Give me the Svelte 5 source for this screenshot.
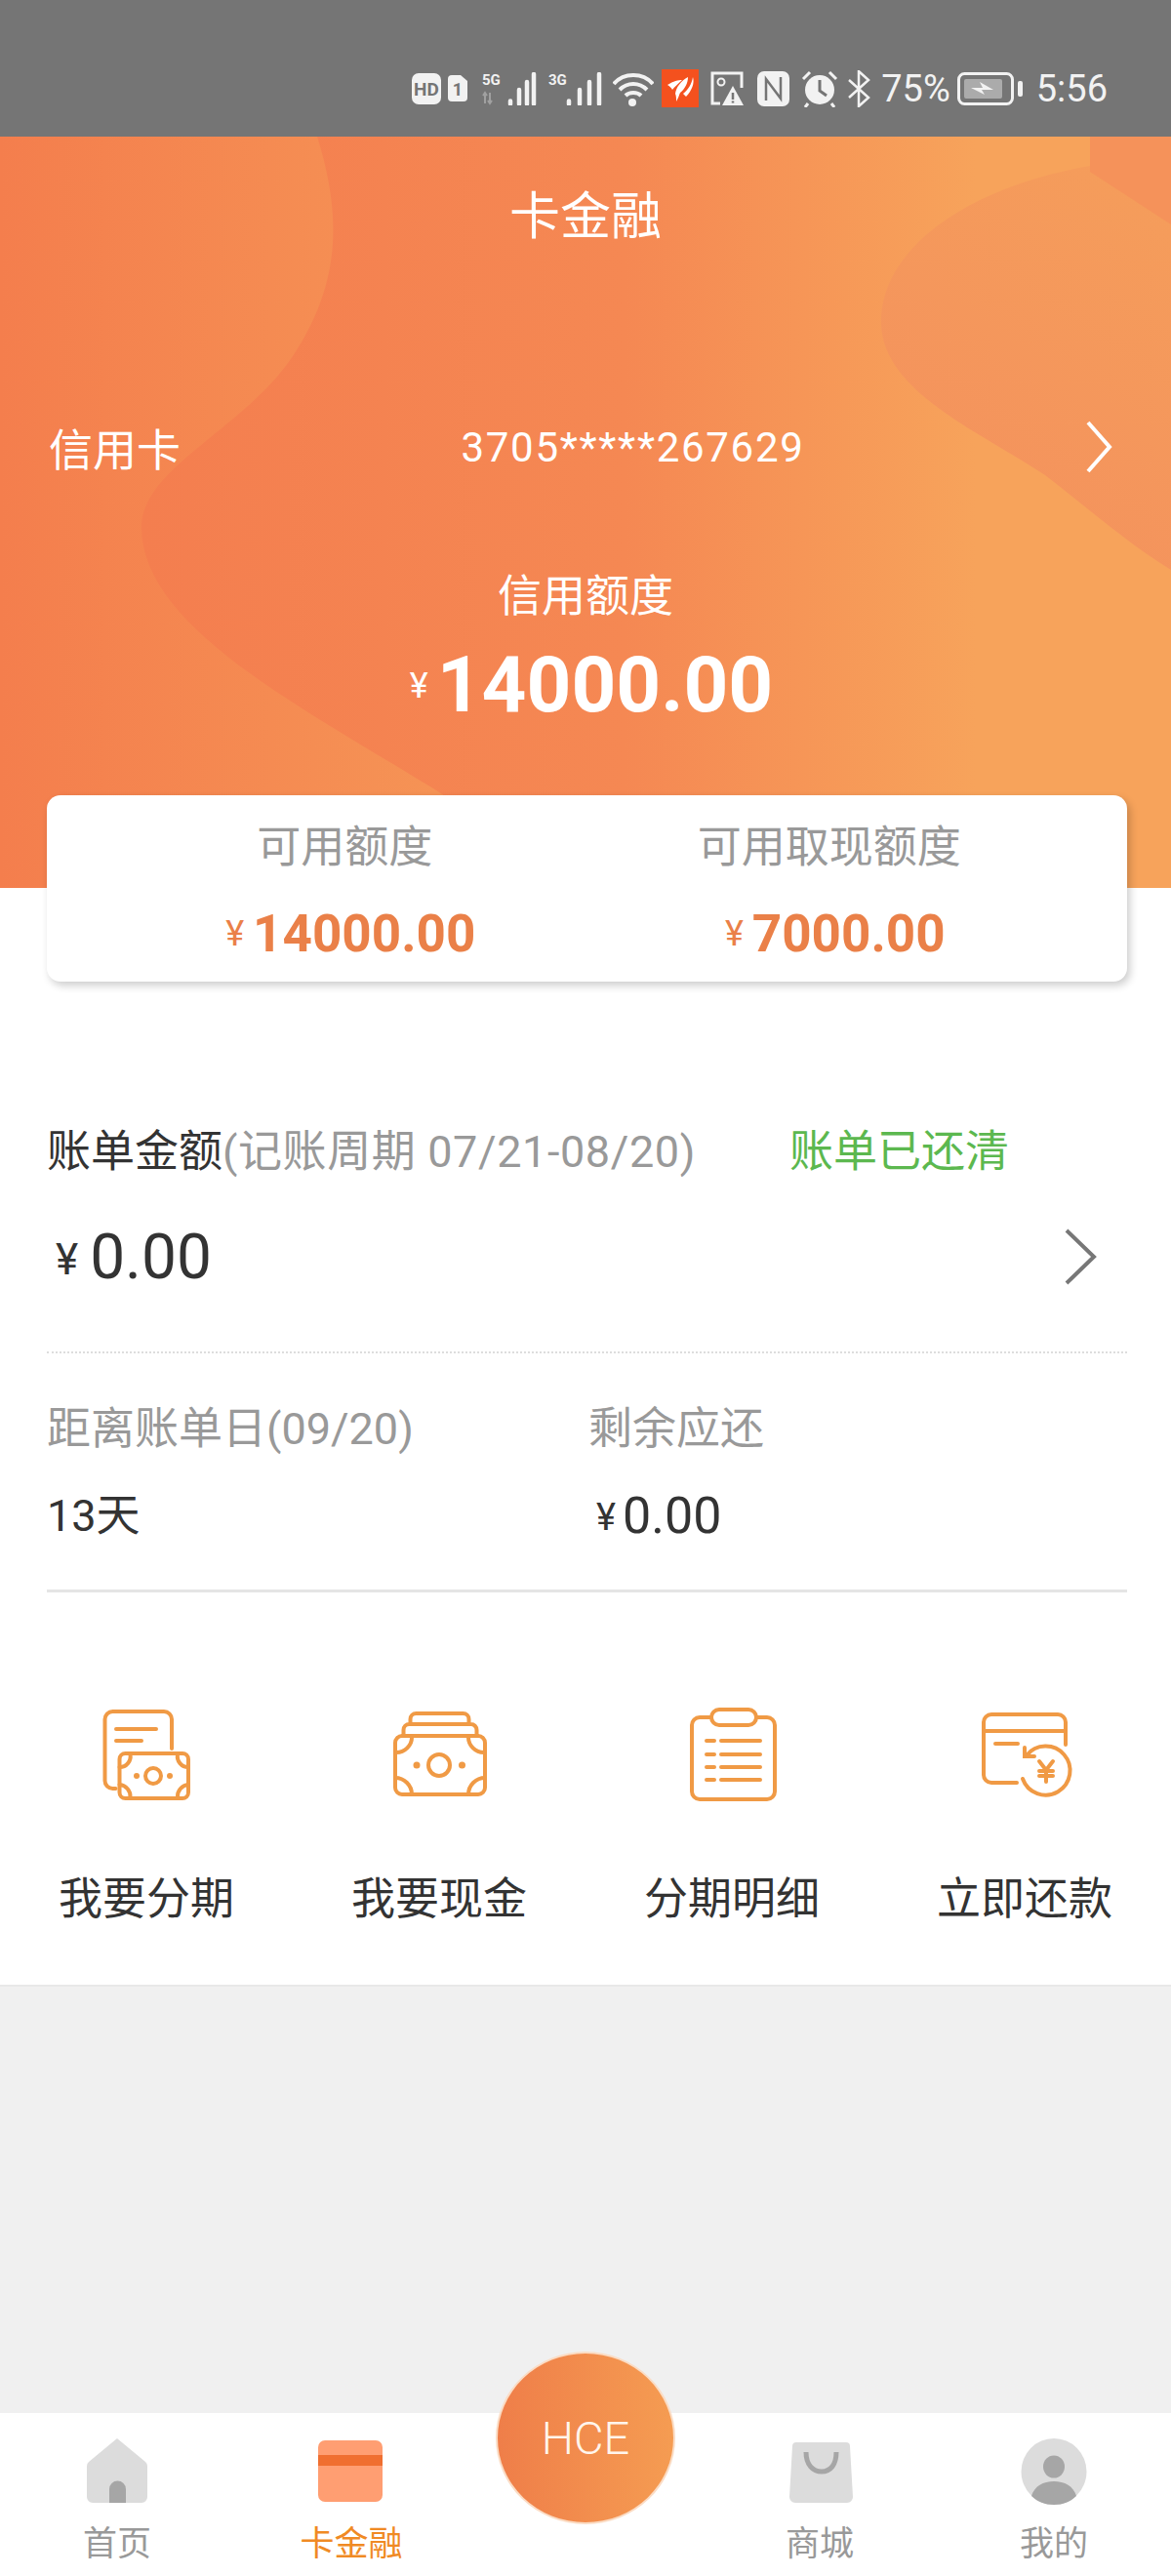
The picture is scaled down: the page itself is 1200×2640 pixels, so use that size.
<script>
  const actions = ["我要分期", "我要现金", "分期明细", "立即还款"];
</script>

<div class="page">
  <div class="status-bar">
    <svg class="si" width="30" height="32" viewBox="0 0 30 32">
      <rect width="30" height="32" rx="7" fill="#f2f2f2" />
      <text x="15" y="23" class="badge-text" font-size="19">HD</text>
    </svg>
    <svg class="si gap7" width="20" height="27" viewBox="0 0 20 27">
      <path d="M4 0h9l7 6v17a4 4 0 0 1-4 4H4a4 4 0 0 1-4-4V4a4 4 0 0 1 4-4z" fill="#f2f2f2" />
      <text x="10" y="21" class="badge-text" font-size="18">1</text>
    </svg>
    <svg class="si gap15" width="56" height="34" viewBox="0 0 56 34">
      <text x="0" y="13" class="net" font-size="15">5G</text>
      <path d="M3 22v10M1 24l2-3 2 3M8 21v10M6 29l2 3 2-3" stroke="#a0a0a0" stroke-width="2" fill="none" />
      <path d="M29 29.500v3M38 18v14.500M46 10v22.500M53 2v30.500" stroke="#f2f2f2" stroke-width="4.500" stroke-linecap="round" />
    </svg>
    <svg class="si gap12" width="56" height="34" viewBox="0 0 56 34">
      <text x="0" y="13" class="net" font-size="15">3G</text>
      <path d="M21 29.500v3M32 18v14.500M42 10v22.500M52 2v30.500" stroke="#f2f2f2" stroke-width="4.500" stroke-linecap="round" />
    </svg>
    <svg class="si gap10" width="42" height="36" viewBox="0 0 42 36">
      <path d="M1 13C11 1 31 1 41 13M7 19c8-8 20-8 28 0M13 25c4-4 12-4 16 0" stroke="#f2f2f2" stroke-width="4" fill="none" />
      <circle cx="20" cy="32" r="4" fill="#f2f2f2" />
    </svg>
    <svg class="si gap8" width="38" height="39" viewBox="0 0 38 39">
      <rect width="38" height="39" fill="#f4511e" />
      <path d="M6 16C12 12 17 11 21 11 17 15 13 18 11 21 10 19 8 17 6 16z" fill="#fff" />
      <path d="M14 25C15 18 20 12 27 8 27 14 24 20 19 24 18 26 17 30 15 33 15 30 15 27 14 25z" fill="#fff" />
      <path d="M22 25C27 21 31 15 32 8 34 14 31 22 25 28 24 27 23 26 22 25z" fill="#fff" />
    </svg>
    <svg class="si gap12" width="34" height="36" viewBox="0 0 34 36">
      <path d="M10 33H2V2h30v15" stroke="#f2f2f2" stroke-width="3" fill="none" />
      <circle cx="11" cy="11" r="3.500" stroke="#f2f2f2" stroke-width="2" fill="none" />
      <path d="M23 15l11 20H12z" fill="#f2f2f2" />
      <path d="M23 22v7M23 30.500v2" stroke="#757575" stroke-width="2.500" />
    </svg>
    <svg class="si gap14" width="33" height="36" viewBox="0 0 33 36">
      <rect width="33" height="36" rx="7" fill="#f2f2f2" />
      <path d="M9 30V8l15 20V6" stroke="#757575" stroke-width="2.500" fill="none" />
    </svg>
    <svg class="si gap12" width="38" height="38" viewBox="0 0 38 38">
      <circle cx="19" cy="20" r="15" fill="#f2f2f2" />
      <path d="M19 10v11l7 5" stroke="#757575" stroke-width="3" fill="none" />
      <path d="M2 9l7-7M36 9l-7-7M7 34l-3 4M31 34l3 4" stroke="#f2f2f2" stroke-width="3" />
    </svg>
    <svg class="si gap10" width="23" height="38" viewBox="0 0 23 38">
      <path d="M1 10l20 18-10 9V1l10 9L1 28" stroke="#f2f2f2" stroke-width="2.500" fill="none" />
    </svg>
    <span class="pct">75%</span>
    <svg class="si gap7" width="67" height="34" viewBox="0 0 67 34">
      <rect x="1.500" y="1.500" width="55" height="31" rx="6" stroke="#f2f2f2" stroke-width="3" fill="none" />
      <rect x="7" y="7" width="39" height="20" rx="2" fill="#ababab" />
      <path d="M14 16h12l-3-6 14 8H25l3 5z" fill="#f2f2f2" />
      <rect x="62" y="9" width="5" height="16" rx="2" fill="#f2f2f2" />
    </svg>
    <span class="time">5:56</span>
  </div>

  <div class="hero">
    <svg class="waves" width="1200" height="770" viewBox="0 0 1200 770">
      <defs>
        <linearGradient id="gl" x1="0" x2="600" y1="0" y2="0" gradientUnits="userSpaceOnUse">
          <stop offset="0" stop-color="#f47e4d" />
          <stop offset="1" stop-color="#f69a58" />
        </linearGradient>
        <linearGradient id="gr" x1="950" x2="1200" y1="420" y2="60" gradientUnits="userSpaceOnUse">
          <stop offset="0" stop-color="#f4915d" />
          <stop offset="1" stop-color="#f59d5b" />
        </linearGradient>
      </defs>
      <path
        d="M0 0H325C350 80 350 150 300 225C250 300 145 340 145 400C145 500 300 580 444 668L600 770H0Z"
        fill="url(#gl)"
      />
      <path
        d="M1117 0V30C1000 50 903 110 903 190C903 260 1000 300 1071 347C1120 385 1160 420 1200 444V0Z"
        fill="url(#gr)"
      />
      <path d="M1117 0V36L1200 90V0Z" fill="#f5925a" />
    </svg>

    <div class="title">卡金融</div>
    <div class="card-row">
      <span>信用卡</span>
      <span class="card-no">3705*****267629</span>
      <svg width="28" height="54" viewBox="0 0 28 54">
        <path d="M3 2l22 25L3 52" stroke="#fff" stroke-width="4" fill="none" />
      </svg>
    </div>
    <div class="limit-label">信用额度</div>
    <div class="limit-value"><span class="yen">¥</span>14000.00</div>

    <div class="quota">
      <div class="quota-col">
        <div class="quota-label">可用额度</div>
        <div class="quota-value"><span class="yen-sm">¥</span>14000.00</div>
      </div>
      <div class="quota-col">
        <div class="quota-label">可用取现额度</div>
        <div class="quota-value"><span class="yen-sm">¥</span>7000.00</div>
      </div>
    </div>
  </div>

  <div class="content">
    <div class="bill">
      <div class="bill-head">
        <span class="dark">账单金额</span><span class="muted period">(记账周期 07/21-08/20)</span>
        <span class="paid">账单已还清</span>
      </div>
      <div class="bill-amount">
        <div class="amount-big"><span class="yen-dark">¥</span>0.00</div>
        <svg width="34" height="58" viewBox="0 0 34 58">
          <path d="M3 2l28 27L3 56" stroke="#777" stroke-width="4" fill="none" />
        </svg>
      </div>
      <div class="dotted"></div>
      <div class="stats">
        <div>
          <div class="muted stat-line">距离账单日(09/20)</div>
          <div class="dark stat-value">13天</div>
        </div>
        <div>
          <div class="muted stat-line">剩余应还</div>
          <div class="dark stat-value money"><span class="yen-small">¥</span>0.00</div>
        </div>
      </div>
      <div class="solid"></div>
    </div>

    <div class="actions">
      {#each actions as label, i}
        <div class="action">
          <svg class="action-icon" width="120" height="100" viewBox="0 0 120 100">
            {#if i === 0}
              <path d="M86 43V13a8 8 0 0 0-8-8H25.500a8 8 0 0 0-8 8V76a8 8 0 0 0 8 8h3M29 23h41M29 35h26" />
              <rect x="32.500" y="48" width="70.500" height="46" rx="6" />
              <circle cx="67" cy="71" r="8" />
              <path d="M32.500 62a11 11 0 0 0 11-13M103 62a11 11 0 0 1-11-13M32.500 80a12 12 0 0 1 11 13M103 80a12 12 0 0 0-11 13" />
              <circle class="dot" cx="50" cy="71" r="3" />
              <circle class="dot" cx="84" cy="71" r="3" />
            {:else if i === 1}
              <rect x="15" y="30" width="92" height="60" rx="7" />
              <path d="M23.500 30V24a6 6 0 0 1 6-6h63a6 6 0 0 1 6 6v6M30.500 18V13a6 6 0 0 1 6-6h48a6 6 0 0 1 6 6v5" />
              <circle cx="60" cy="60" r="11" />
              <path d="M15 47a16 16 0 0 0 17-17M107 47a16 16 0 0 1-17-17M15 73a17 17 0 0 1 17 17M107 73a17 17 0 0 0-17 17" />
              <circle class="dot" cx="37" cy="60" r="3.500" />
              <circle class="dot" cx="83.500" cy="60" r="3.500" />
            {:else if i === 2}
              <path d="M39 11H27a8 8 0 0 0-8 8V87a8 8 0 0 0 8 8H96a8 8 0 0 0 8-8V19a8 8 0 0 0-8-8H85" />
              <rect x="39" y="3" width="46" height="16" rx="8" />
              <path d="M34 35h8M49 35h40M34 49h8M49 49h40M34 62h8M49 62h40M34 75h8M49 75h40" />
            {:else}
              <path d="M52 78H26a8 8 0 0 1-8-8V16a8 8 0 0 1 8-8H94a8 8 0 0 1 8 8V39M18 25h84M30 38h23" />
              <path d="M58 74A25 25 0 1 0 62 50M60 42v9h10" />
              <path d="M75 56l7 9 7-9M82 65v12M75 66h14M75 71h14" />
            {/if}
          </svg>
          <div class="action-label">{label}</div>
        </div>
      {/each}
    </div>
  </div>

  <div class="spacer"></div>

  <div class="tabbar">
    <div class="tab">
      <svg width="70" height="70" viewBox="0 0 70 70">
        <path d="M35 1L6 25a6 6 0 0 0-2 5V61a6 6 0 0 0 6 6H60a6 6 0 0 0 6-6V30a6 6 0 0 0-2-5z" fill="#dcdcdc" />
        <path d="M27 67V53a8.500 8.500 0 0 1 17 0V67z" fill="#a6a6a6" />
      </svg>
      <span class="tab-label">首页</span>
    </div>
    <div class="tab active">
      <svg width="70" height="70" viewBox="0 0 70 70">
        <rect x="1" y="3" width="66" height="63" rx="7" fill="#ff9e72" />
        <rect x="1" y="18" width="66" height="11" fill="#f06f30" />
      </svg>
      <span class="tab-label">卡金融</span>
    </div>
    <div class="tab"></div>
    <div class="tab">
      <svg width="70" height="70" viewBox="0 0 70 70">
        <path d="M11 5H62a4 4 0 0 1 4 4L69 61a6 6 0 0 1-6 6H10a6 6 0 0 1-6-6L7 9a4 4 0 0 1 4-4z" fill="#dcdcdc" />
        <path d="M21 15c0 13 7 20 16 20s15-7 15-20" stroke="#a6a6a6" stroke-width="5" fill="none" />
      </svg>
      <span class="tab-label">商城</span>
    </div>
    <div class="tab">
      <svg width="70" height="70" viewBox="0 0 70 70">
        <ellipse cx="35" cy="35" rx="33.500" ry="34" fill="#dcdcdc" />
        <ellipse cx="35" cy="30" rx="11" ry="11.500" fill="#a6a6a6" />
        <path d="M12 60C15 50 24 45 35 45S55 50 58 60C52 66 44 69 35 69S18 66 12 60z" fill="#a6a6a6" />
      </svg>
      <span class="tab-label">我的</span>
    </div>
    <div class="hce">HCE</div>
  </div>
</div>

<style>
  :global(body) {
    margin: 0;
    background: #f0f0f0;
  }

  .page {
    width: 1200px;
    height: 2640px;
    display: flex;
    flex-direction: column;
    font-family: Roboto, "Noto Sans CJK SC", sans-serif;
    overflow: hidden;
  }

  .status-bar {
    height: 140px;
    flex-shrink: 0;
    box-sizing: border-box;
    padding: 41px 65px 0 0;
    background: #757575;
    display: flex;
    align-items: center;
    justify-content: flex-end;
    color: #f2f2f2;
  }

  .si {
    flex-shrink: 0;
  }

  .gap7 { margin-left: 7px; }
  .gap8 { margin-left: 8px; }
  .gap10 { margin-left: 10px; }
  .gap12 { margin-left: 12px; }
  .gap14 { margin-left: 14px; }
  .gap15 { margin-left: 15px; }

  .badge-text {
    fill: #757575;
    font-family: Roboto, sans-serif;
    font-weight: 700;
    text-anchor: middle;
  }

  .net {
    fill: #f2f2f2;
    font-family: Roboto, sans-serif;
    font-weight: 700;
  }

  .pct {
    margin-left: 11px;
    font-size: 38px;
    line-height: 44px;
  }

  .time {
    margin-left: 14px;
    font-size: 38px;
    line-height: 44px;
  }

  .hero {
    position: relative;
    height: 770px;
    flex-shrink: 0;
    box-sizing: border-box;
    padding-top: 53px;
    background: linear-gradient(90deg, #f47e4f 145px, #f58853 640px, #f7a35b 1000px);
    color: #fff;
  }

  .waves {
    position: absolute;
    top: 0;
    left: 0;
  }

  .title,
  .card-row,
  .limit-label,
  .limit-value {
    position: relative;
  }

  .title {
    font-size: 52px;
    line-height: 60px;
    text-align: center;
  }

  .card-row {
    margin-top: 175px;
    height: 60px;
    padding: 0 64px 0 50px;
    display: flex;
    align-items: center;
    justify-content: space-between;
    font-size: 45px;
  }

  .card-row svg {
    margin-right: -4px;
  }

  .card-no {
    font-size: 42px;
    letter-spacing: 1.700px;
  }

  .limit-label {
    margin-top: 94px;
    font-size: 45px;
    line-height: 60px;
    text-align: center;
  }

  .limit-value {
    margin-top: 15px;
    padding-left: 12px;
    font-size: 80px;
    line-height: 90px;
    font-weight: 700;
    text-align: center;
  }

  .yen {
    font-size: 36px;
    font-weight: 400;
    margin-right: 9px;
    vertical-align: 14px;
  }

  .quota {
    position: absolute;
    left: 48px;
    top: 675px;
    width: 1107px;
    height: 191px;
    box-sizing: border-box;
    padding: 24px 57px 0;
    display: grid;
    grid-template-columns: 1fr 1fr;
    background: #fff;
    border-radius: 14px;
    box-shadow: 3px 4px 9px rgba(0, 0, 0, 0.2);
    text-align: center;
  }

  .quota-label {
    font-size: 45px;
    line-height: 60px;
    color: #999;
  }

  .quota-value {
    margin-top: 28px;
    padding-left: 12px;
    font-size: 53px;
    line-height: 60px;
    font-weight: 700;
    color: #ea8048;
  }

  .yen-sm {
    font-size: 36px;
    font-weight: 400;
    margin-right: 9px;
    vertical-align: 6px;
  }

  .content {
    background: #fff;
    flex-shrink: 0;
    height: 1126px;
    box-sizing: border-box;
    border-bottom: 2px solid #e8e8e8;
  }

  .bill {
    padding: 236px 45px 0 48px;
  }

  .bill-head {
    height: 60px;
    display: flex;
    align-items: center;
    font-size: 45px;
  }

  .dark {
    color: #333;
  }

  .muted {
    color: #999;
  }

  .period {
    letter-spacing: 0.600px;
  }

  .paid {
    margin-left: 96px;
    color: #5cb84f;
  }

  .bill-amount {
    margin-top: 42px;
    height: 80px;
    display: flex;
    align-items: center;
    justify-content: space-between;
    padding: 0 31px 0 9px;
  }

  .amount-big {
    font-size: 64px;
    color: #333;
  }

  .yen-dark {
    font-size: 44px;
    margin-right: 12px;
    vertical-align: 4px;
  }

  .dotted {
    margin-top: 57px;
    border-top: 2px dotted #ddd;
  }

  .stats {
    margin-top: 48px;
    display: grid;
    grid-template-columns: 555px 1fr;
    font-size: 45px;
  }

  .stat-line {
    height: 60px;
    line-height: 60px;
  }

  .stat-value {
    margin-top: 29px;
    height: 60px;
    line-height: 60px;
  }

  .money {
    font-size: 52px;
    padding-left: 8px;
  }

  .yen-small {
    font-size: 38px;
    margin-right: 7px;
    vertical-align: 3px;
  }

  .solid {
    margin-top: 45px;
    height: 3px;
    background: #e5e5e5;
  }

  .actions {
    margin-top: 117px;
    display: grid;
    grid-template-columns: repeat(4, 300px);
  }

  .action {
    display: flex;
    flex-direction: column;
    align-items: center;
  }

  .action-icon {
    fill: none;
    stroke: #f09a45;
    stroke-width: 4;
    stroke-linecap: round;
  }

  .dot {
    fill: #f09a45;
    stroke: none;
  }

  .action-label {
    margin-top: 68px;
    font-size: 45px;
    line-height: 60px;
    color: #333;
  }

  .spacer {
    flex: 1;
    background: #f0f0f0;
  }

  .tabbar {
    position: relative;
    height: 167px;
    flex-shrink: 0;
    display: grid;
    grid-template-columns: repeat(5, 240px);
    background: #fff;
  }

  .tab {
    padding-top: 25px;
    display: flex;
    flex-direction: column;
    align-items: center;
  }

  .tab-label {
    margin-top: 18px;
    font-size: 35px;
    line-height: 44px;
    color: #999;
  }

  .tab.active .tab-label {
    color: #f08a24;
  }

  .hce {
    position: absolute;
    left: 508px;
    top: -63px;
    width: 184px;
    height: 177px;
    box-sizing: border-box;
    border: 2px solid #fbdcc4;
    border-radius: 50%;
    display: flex;
    align-items: center;
    justify-content: center;
    background: linear-gradient(90deg, #ef7e49, #f59c52);
    color: #fff5ec;
    font-size: 47px;
    font-weight: 300;
  }
</style>
